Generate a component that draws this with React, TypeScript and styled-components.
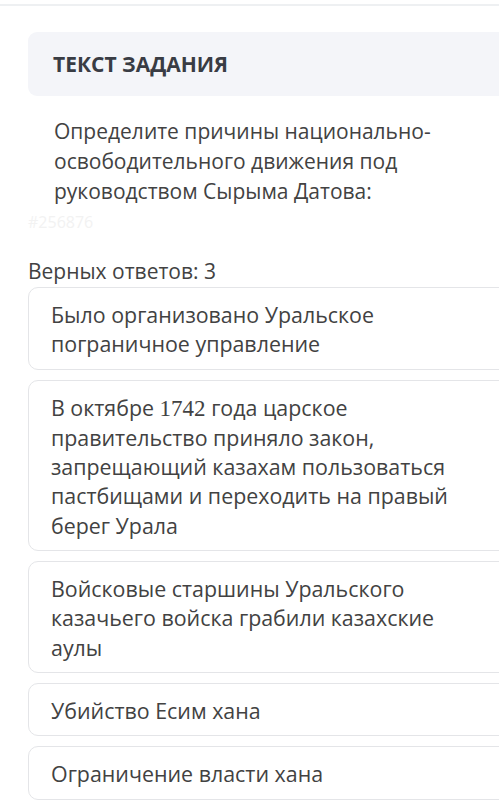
import React from "react";
import styled, { createGlobalStyle } from "styled-components";

const GlobalStyle = createGlobalStyle`
  html, body {
    margin: 0;
    padding: 0;
    background: #fff;
    overflow: hidden;
  }
  body {
    font-family: "Open Sans", "Noto Sans", sans-serif;
  }
`;

const Page = styled.div`
  width: 499px;
  overflow: hidden;
`;

const TopRule = styled.div`
  height: 4px;
  border-bottom: 2px solid #eef0f2;
`;

const Content = styled.div`
  padding: 26px 0 0 28px;
  width: 500px;
`;

const TaskHeader = styled.div`
  background: #f4f5f9;
  border-radius: 9px;
  height: 64px;
  display: flex;
  align-items: center;
  padding-left: 25px;
  font-weight: 700;
  font-size: 21px;
  color: #393c44;
`;

const Question = styled.div`
  padding: 20px 0 0 26px;
  font-size: 21px;
  line-height: 30px;
  color: #424242;
`;

const TaskId = styled.div`
  font-size: 16px;
  line-height: 20px;
  color: #f2f2f2;
  margin-top: 6px;
`;

const Counter = styled.div`
  margin-top: 24px;
  font-size: 21px;
  line-height: 30px;
  color: #424242;
`;

const Options = styled.div`
  display: flex;
  flex-direction: column;
  gap: 10px;
  margin-top: 1px;
`;

const Option = styled.div`
  border: 1.5px solid #e4e5e8;
  border-radius: 10px;
  padding: 12px 0 10px 22px;
  font-size: 21.4px;
  line-height: 29.3px;
  color: #424242;
`;

const Num = styled.span`
  font-family: "Liberation Serif", "DejaVu Serif", serif;
  font-size: 23px;
`;

export default function App() {
  return (
    <Page>
      <GlobalStyle />
      <TopRule />
      <Content>
        <TaskHeader>ТЕКСТ ЗАДАНИЯ</TaskHeader>
        <Question>
          Определите причины национально-
          <br />
          освободительного движения под
          <br />
          руководством Сырыма Датова:
        </Question>
        <TaskId>#256876</TaskId>
        <Counter>Верных ответов: 3</Counter>
        <Options>
          <Option>
            Было организовано Уральское
            <br />
            пограничное управление
          </Option>
          <Option>
            В октябре <Num>1742</Num> года царское
            <br />
            правительство приняло закон,
            <br />
            запрещающий казахам пользоваться
            <br />
            пастбищами и переходить на правый
            <br />
            берег Урала
          </Option>
          <Option>
            Войсковые старшины Уральского
            <br />
            казачьего войска грабили казахские
            <br />
            аулы
          </Option>
          <Option>Убийство Есим хана</Option>
          <Option>Ограничение власти хана</Option>
        </Options>
      </Content>
    </Page>
  );
}
